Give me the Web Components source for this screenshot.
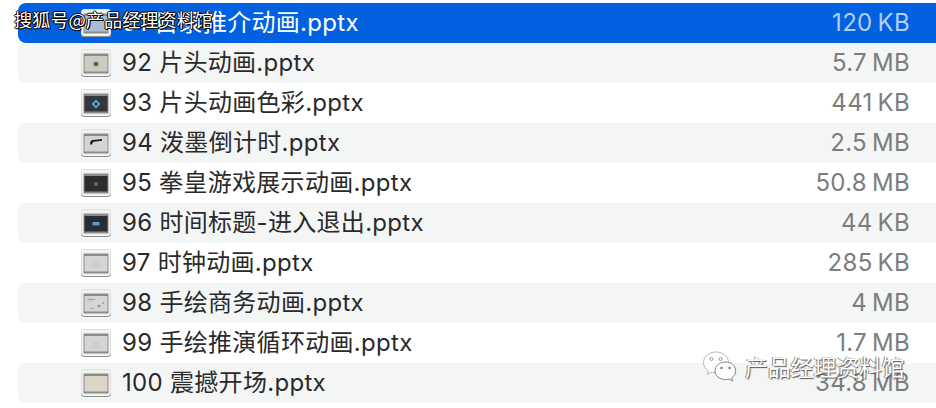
<!DOCTYPE html>
<html lang="zh">
<head>
<meta charset="utf-8">
<title>pptx</title>
<style>
    html, body { margin: 0; background: #fff; height: 100%; overflow: hidden; }
</style>
</head>
<body>
<file-list>
    <file-row name="91 目录推介动画.pptx" size="120" unit="KB" selected screen="#a9bcd6"></file-row>
    <file-row name="92 片头动画.pptx" size="5.7" unit="MB" screen="#c9ccc6" mark="dot"></file-row>
    <file-row name="93 片头动画色彩.pptx" size="441" unit="KB" screen="#33363a" mark="diamond"></file-row>
    <file-row name="94 泼墨倒计时.pptx" size="2.5" unit="MB" screen="#d4d4d2" mark="ink"></file-row>
    <file-row name="95 拳皇游戏展示动画.pptx" size="50.8" unit="MB" screen="#2c2d2f" mark="small"></file-row>
    <file-row name="96 时间标题-进入退出.pptx" size="44" unit="KB" screen="#2b2c2f" mark="bar"></file-row>
    <file-row name="97 时钟动画.pptx" size="285" unit="KB" screen="#d5d5d3" mark="clock"></file-row>
    <file-row name="98 手绘商务动画.pptx" size="4" unit="MB" screen="#d6d6d6" mark="sketch"></file-row>
    <file-row name="99 手绘推演循环动画.pptx" size="1.7" unit="MB" screen="#d4d4d4" mark="faint"></file-row>
    <file-row name="100 震撼开场.pptx" size="34.8" unit="MB" screen="#dcd6c6"></file-row>
</file-list>
<water-marks></water-marks>

<script>
// Miniatura del archivo pptx
class FileIcon extends HTMLElement {
    constructor() {
        super();
        this.attachShadow({ mode: 'open' });
        const screen = this.getAttribute('screen') || '#ccc';
        const marks = {
            dot: '<circle cx="14" cy="12" r="3.6" fill="#a6bf8e"/><circle cx="14" cy="12" r="1.8" fill="#3c3f3a"/>',
            diamond: '<path d="M14 7.600 18.400 12 14 16.400 9.600 12Z" fill="#5fa6de"/><path d="M14 10 16 12 14 14 12 12Z" fill="#2c3238"/>',
            ink: '<path d="M8 12.500C8.300 8.800 9.500 8 11 8L20 7 20 8.800 12 9.800C11 10 10.500 11 10 12.500Z" fill="#1c1d1f"/>',
            small: '<circle cx="14" cy="12" r="2" fill="#6d7058"/>',
            bar: '<rect x="10.500" y="10" width="7" height="3.400" fill="#5b9bd8"/>',
            clock: '<circle cx="14" cy="12" r="3" fill="none" stroke="#c0c0be" stroke-width="1"/><path d="M14 10v2" stroke="#c0c0be" stroke-width="1"/>',
            sketch: '<path d="M5.500 7.500H13" stroke="#999" stroke-width=".9"/><path d="M5.500 9.500H10" stroke="#bbb" stroke-width=".7"/><circle cx="17" cy="14" r="1.600" fill="#9b9b9b"/><circle cx="21" cy="11" r="1.200" fill="#aaa"/><path d="M8 16.400h4" stroke="#aaa"/>',
            faint: '<path d="M11 11h6M11 14h6" stroke="#c8c8c8" stroke-width="1.600"/>'
        };
        this.shadowRoot.innerHTML = `
            <style>
                :host { display: block; width: 30px; height: 28px; flex: none; }
                svg { display: block; }
            </style>
            <svg width="30" height="28" viewBox="-1 -3 30 28" aria-hidden="true">
                <rect x="-.5" y="-2.5" width="29" height="27" rx="2.5" fill="#f3f3f1" stroke="#dedede"/>
                <path d="M-.5 22.500a2.500 2.500 0 0 0 2.500 2h24a2.500 2.500 0 0 0 2.500-2" fill="none" stroke="#8f8f8f"/>
                <rect x="1.500" y="1.500" width="25" height="20" fill="#8a8b8c"/>
                <rect x="2.500" y="4" width="23" height="15.500" fill="${screen}"/>
                ${marks[this.getAttribute('mark')] || ''}
            </svg>
        `;
    }
}
customElements.define('file-icon', FileIcon);

// Fila de la lista de archivos
class FileRow extends HTMLElement {
    constructor() {
        super();
        this.attachShadow({ mode: 'open' });
        const name = this.getAttribute('name');
        const size = this.getAttribute('size');
        const unit = this.getAttribute('unit');
        const screen = this.getAttribute('screen');
        const mark = this.getAttribute('mark') || '';

        this.shadowRoot.innerHTML = `
            <style>
                :host {
                    display: flex;
                    align-items: center;
                    height: 40px;
                    padding-left: 63px;
                    padding-right: 26px;
                    border-radius: 8px 0 0 8px;
                    color: #2a2a2a;
                    letter-spacing: .3px;
                    font: 24px/36px Inter, "Noto Sans CJK SC", sans-serif;
                }
                :host(:nth-child(even)) { background: #f4f5f5; }
                :host([selected]) { background: #0161e0; color: #fff; }
                .name { margin: -1px 0 0 11px; flex: 1; white-space: nowrap; }
                .size { margin-top: -1px; color: #7d7d7d; white-space: nowrap; }
                :host([selected]) .size { color: #b4cdf4; }
                .unit { margin-left: 5px; }
            </style>
            <file-icon screen="${screen}" mark="${mark}"></file-icon>
            <span class="name">${name}</span>
            <span class="size">${size}<span class="unit">${unit}</span></span>
        `;
    }
}
customElements.define('file-row', FileRow);

class FileList extends HTMLElement {
    constructor() {
        super();
        this.attachShadow({ mode: 'open' });
        this.shadowRoot.innerHTML = `
            <style>
                :host { display: block; padding: 3px 0 0 18px; }
            </style>
            <slot></slot>
        `;
    }
}
customElements.define('file-list', FileList);

// Marcas de agua que quedan encima de la lista
class WaterMarks extends HTMLElement {
    constructor() {
        super();
        this.attachShadow({ mode: 'open' });
        this.shadowRoot.innerHTML = `
            <style>
                :host { display: block; font-family: "Noto Sans CJK SC", sans-serif; }
                .top {
                    position: absolute; left: 14px; top: 6px;
                    color: #fff; font-size: 18.2px; line-height: 26px; white-space: nowrap;
                    text-shadow: 1px 1px 0 #000, -1px 0 0 #000, 0 1px 0 #000, 1px 0 0 #000, 0 -1px 0 #000;
                }
                .bottom {
                    position: absolute; left: 702px; top: 351px;
                    display: flex; align-items: center; gap: 7px;
                    color: #fff; font-size: 22.8px; line-height: 30px; white-space: nowrap;
                    text-shadow: 1px 1px 1px #555, -1px 0 0 #888;
                }
            </style>
            <div class="top">搜狐号@产品经理资料馆</div>
            <div class="bottom">
                <svg width="36" height="32" viewBox="0 0 36 32" aria-hidden="true">
                    <path d="M14 1C7 1 1.500 5.500 1.500 11.500c0 3.500 2 6.300 4.800 8.200l-1 3.600 4.200-2.100c1.400.4 2.800.6 4.500.6 6.500 0 12.500-4.500 12.500-10.300C26.500 5.500 21 1 14 1Z" fill="#fff" stroke="#aaa" stroke-width=".8"/>
                    <circle cx="9.500" cy="8" r="1.500" fill="none" stroke="#999"/>
                    <circle cx="18.500" cy="8" r="1.500" fill="none" stroke="#999"/>
                    <path d="M23.500 11c-6 0-10.500 3.800-10.500 8.800s4.500 8.800 10.500 8.800c1.300 0 2.500-.2 3.600-.5l3.400 1.800-.8-3c2.400-1.600 4-4.100 4-7.100 0-5-4.200-8.800-10.200-8.800Z" fill="#fff" stroke="#777" stroke-width=".9"/>
                    <circle cx="19.500" cy="17" r="1.200" fill="#777"/>
                    <circle cx="27.500" cy="17" r="1.200" fill="#777"/>
                </svg>
                <span>产品经理资料馆</span>
            </div>
        `;
    }
}
customElements.define('water-marks', WaterMarks);
</script>
</body>
</html>
